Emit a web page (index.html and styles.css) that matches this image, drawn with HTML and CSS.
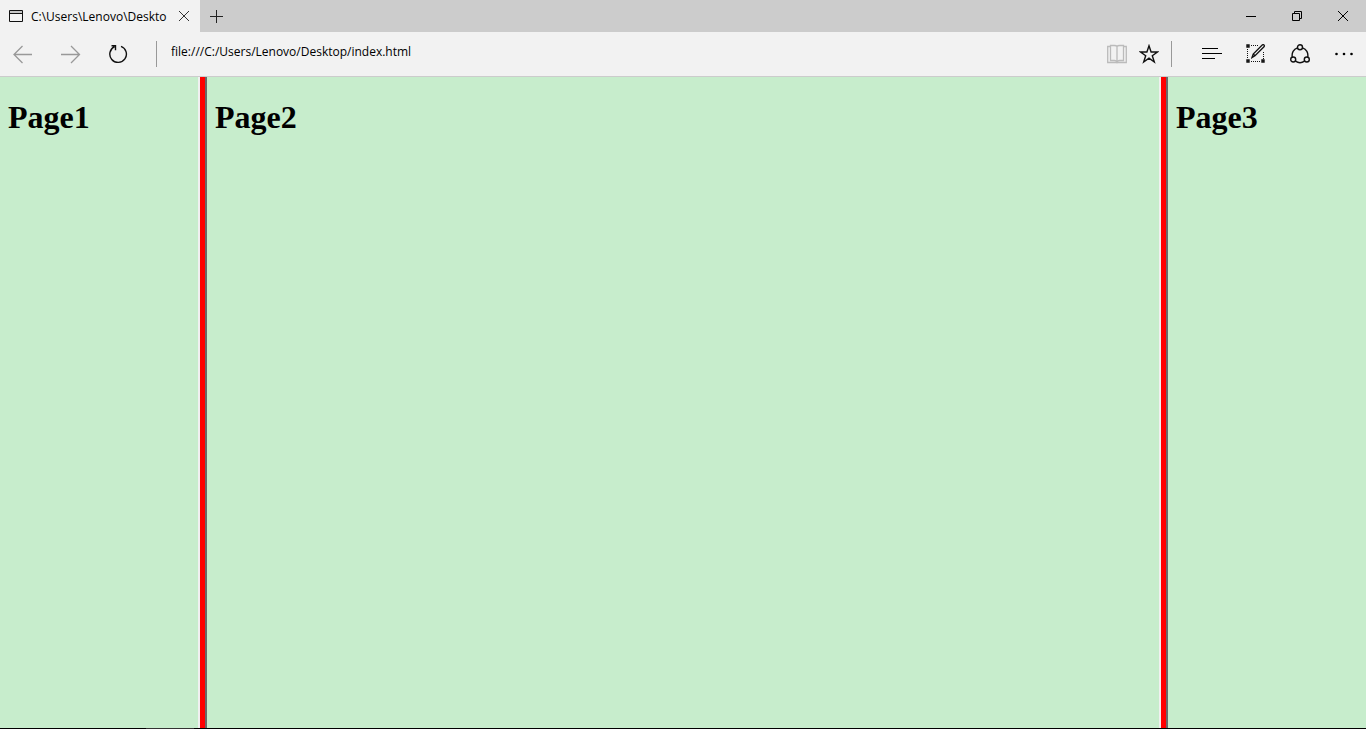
FILE: index.html
```html
<!DOCTYPE html>
<html lang="en">
<head>
    <meta charset="UTF-8">
    <meta name="viewport" content="width=device-width, initial-scale=1.0">
    <title>C:\Users\Lenovo\Desktop\index.html</title>
    <link rel="stylesheet" href="styles.css">
</head>
<body>
    <header class="tabbar">
        <div class="tab">
            <svg class="tab-icon" width="14" height="12" viewBox="0 0 14 12" fill="none" stroke="#111">
                <path d="M.5.5h13v11H.5zM1 3.5h12"/>
                <path d="M1 2h12" stroke="#999"/>
            </svg>
            <span class="tab-title">C:\Users\Lenovo\Deskto</span>
            <button class="tab-close" aria-label="Close tab">
                <svg width="10" height="10" viewBox="0 0 10 10" stroke="#333"><path d="M0 0l10 10M10 0L0 10"/></svg>
            </button>
        </div>
        <button class="new-tab" aria-label="New tab">
            <svg width="13" height="13" viewBox="0 0 13 13" stroke="#222"><path d="M0 6.5h13M6.5 0v13"/></svg>
        </button>
        <div class="window-controls">
            <button aria-label="Minimize">
                <svg width="10" height="10" viewBox="0 0 10 10" stroke="#000"><path d="M0 5.5h10"/></svg>
            </button>
            <button aria-label="Restore">
                <svg width="10" height="10" viewBox="0 0 10 10" fill="none" stroke="#000"><path d="M.5 2.5h7v7h-7zM2.5 2.5v-2h7v7h-2"/></svg>
            </button>
            <button aria-label="Close">
                <svg width="10" height="10" viewBox="0 0 10 10" stroke="#000"><path d="M0 0l10 10M10 0L0 10"/></svg>
            </button>
        </div>
    </header>

    <nav class="toolbar">
        <div class="nav-buttons">
            <button aria-label="Back">
                <svg width="20" height="20" viewBox="0 0 20 20" fill="none" stroke="#999" stroke-width="1.3"><path d="M19 10.500H1M9.500 2L1 10.500L9.500 19"/></svg>
            </button>
            <button aria-label="Forward">
                <svg width="20" height="20" viewBox="0 0 20 20" fill="none" stroke="#999" stroke-width="1.3"><path d="M0 10.500h18.500M10 2l8.500 8.500L10 19"/></svg>
            </button>
            <button aria-label="Refresh">
                <svg width="20" height="20" viewBox="0 0 20 20" fill="none" stroke="#111" stroke-width="1.4"><path d="M12 2.300A8.300 8.300 0 1 1 5.500 2.600M2.500 1.700h4v4.500"/></svg>
            </button>
        </div>
        <span class="separator"></span>
        <input class="address" type="text" aria-label="Address" value="file:///C:/Users/Lenovo/Desktop/index.html">
        <div class="page-buttons">
            <button aria-label="Reading view">
                <svg width="20" height="20" viewBox="0 0 20 20" fill="none" stroke="#bbb" stroke-width="1.3"><path d="M3.500 1.500h4q2 0 2.500 1q.5-1 2.500-1h4v15h-4q-2 0-2.500 1.500q-.5-1.500-2.500-1.500h-4zM10 2.500V18M3 2.500H.7v16h18.600v-16H17"/></svg>
            </button>
            <button aria-label="Add to favorites">
                <svg width="20" height="20" viewBox="0 0 20 20" fill="none" stroke="#111" stroke-width="1.4"><path d="M10 1.800l2.100 6.200h6.400l-5.200 3.800 2 6.200-5.300-3.800-5.300 3.800 2-6.200L1.500 8h6.400z"/></svg>
            </button>
        </div>
        <span class="separator"></span>
        <div class="menu-buttons">
            <button aria-label="Hub">
                <svg width="20" height="20" viewBox="0 0 20 20" stroke="#000"><path d="M0 4.500h16M0 9.500h20M0 14.500h13"/></svg>
            </button>
            <button aria-label="Make a web note">
                <svg width="20" height="20" viewBox="0 0 20 20" fill="none" stroke="#111">
                    <path d="M5 1.500h7M1.500 5v10M5 17.500h10M17.500 8v7" stroke-dasharray="1 1"/>
                    <path d="M1 1h2v2H1zM1 16h2v2H1zM16 16h2v2h-2z" fill="#777" stroke-width="1.4"/>
                    <path d="M6 13.500l1.200-3.500 9-9q1-.8 1.800 0t0 1.800l-9 9zM7.200 10l1.800 1.800" stroke-width="1.3"/>
                </svg>
            </button>
            <button aria-label="Share">
                <svg width="20" height="20" viewBox="0 0 20 20" fill="none" stroke="#111" stroke-width="1.4">
                    <circle cx="10" cy="3.200" r="2.500"/>
                    <circle cx="3.200" cy="15.500" r="2.500"/>
                    <circle cx="16.800" cy="15.500" r="2.500"/>
                    <path d="M7.500 3.800C3.500 5 1.500 9 2.300 13M12.500 3.800c4 1.200 6 5.200 5.200 9.200M5.500 17.200q4.500 3 9 0"/>
                </svg>
            </button>
            <button aria-label="More actions">
                <svg width="20" height="20" viewBox="0 0 20 20" fill="#000"><circle cx="2.500" cy="10" r="1.300"/><circle cx="10" cy="10" r="1.300"/><circle cx="17.500" cy="10" r="1.300"/></svg>
            </button>
        </div>
    </nav>

    <main class="frameset">
        <section class="frame frame-side"><h1>Page1</h1></section>
        <div class="frame-border"></div>
        <section class="frame frame-main"><h1>Page2</h1></section>
        <div class="frame-border"></div>
        <section class="frame frame-side"><h1>Page3</h1></section>
    </main>
    <footer class="taskbar-edge"><div class="taskbar-item"></div></footer>
</body>
</html>
```
FILE: styles.css
```css
* {
    box-sizing: border-box;
}
body {
    margin: 0;
    height: 100vh;
    display: flex;
    flex-direction: column;
    overflow: hidden;
    font-family: "Open Sans", "Noto Sans", sans-serif;
    font-size: 12px;
    color: #000;
}
button {
    display: flex;
    align-items: center;
    justify-content: center;
    padding: 0;
    border: 0;
    background: none;
}
svg {
    display: block;
    flex: none;
}

/* Tabs and window controls */
.tabbar {
    display: flex;
    flex: none;
    height: 32px;
    background: #cccccc;
}
.tab {
    display: flex;
    align-items: center;
    width: 200px;
    padding: 0 11px 0 9px;
    background: #f2f2f2;
}
.tab-title {
    flex: 1;
    min-width: 0;
    margin: 0 11px 0 8px;
    overflow: hidden;
    white-space: nowrap;
}
.new-tab {
    width: 33px;
}
.window-controls {
    display: flex;
    margin-left: auto;
}
.window-controls button {
    width: 46px;
}

/* Address toolbar */
.toolbar {
    display: flex;
    flex: none;
    align-items: center;
    height: 45px;
    padding: 0 12px 0 13px;
    background: #f2f2f2;
    border-bottom: 1px solid #cccccc;
}
.nav-buttons {
    display: flex;
    gap: 28px;
    margin-right: 27px;
}
.separator {
    width: 1px;
    height: 26px;
    background: #999;
}
.address {
    flex: 1;
    min-width: 0;
    height: 32px;
    margin: 0 12px 0 14px;
    padding: 0 0 6px;
    border: 0;
    outline: 0;
    background: none;
    font: inherit;
    color: inherit;
}
.page-buttons {
    display: flex;
    gap: 12px;
    margin-right: 12px;
}
.menu-buttons {
    display: flex;
    gap: 24px;
    margin-left: 30px;
}

/* Frames */
.frameset {
    display: flex;
    flex: 1;
    min-height: 0;
}
.frame {
    padding: 8px;
    background: #c7edcc;
    font-family: "Liberation Serif", "Times New Roman", serif;
}
.frame-side {
    flex: none;
    width: 198px;
}
.frame-main {
    flex: 1;
}
.frame h1 {
    margin: 14px 0;
    font-size: 32px;
    line-height: 37px;
}
.frame-border {
    width: 9px;
    background: #ff0000;
    border-left: 2px solid #f0f0f0;
    border-right: 2px solid #696969;
}

.taskbar-edge {
    flex: none;
    height: 1px;
    padding-left: 146px;
    background: #000;
}
.taskbar-item {
    width: 48px;
    height: 1px;
    background: #333;
}
```
